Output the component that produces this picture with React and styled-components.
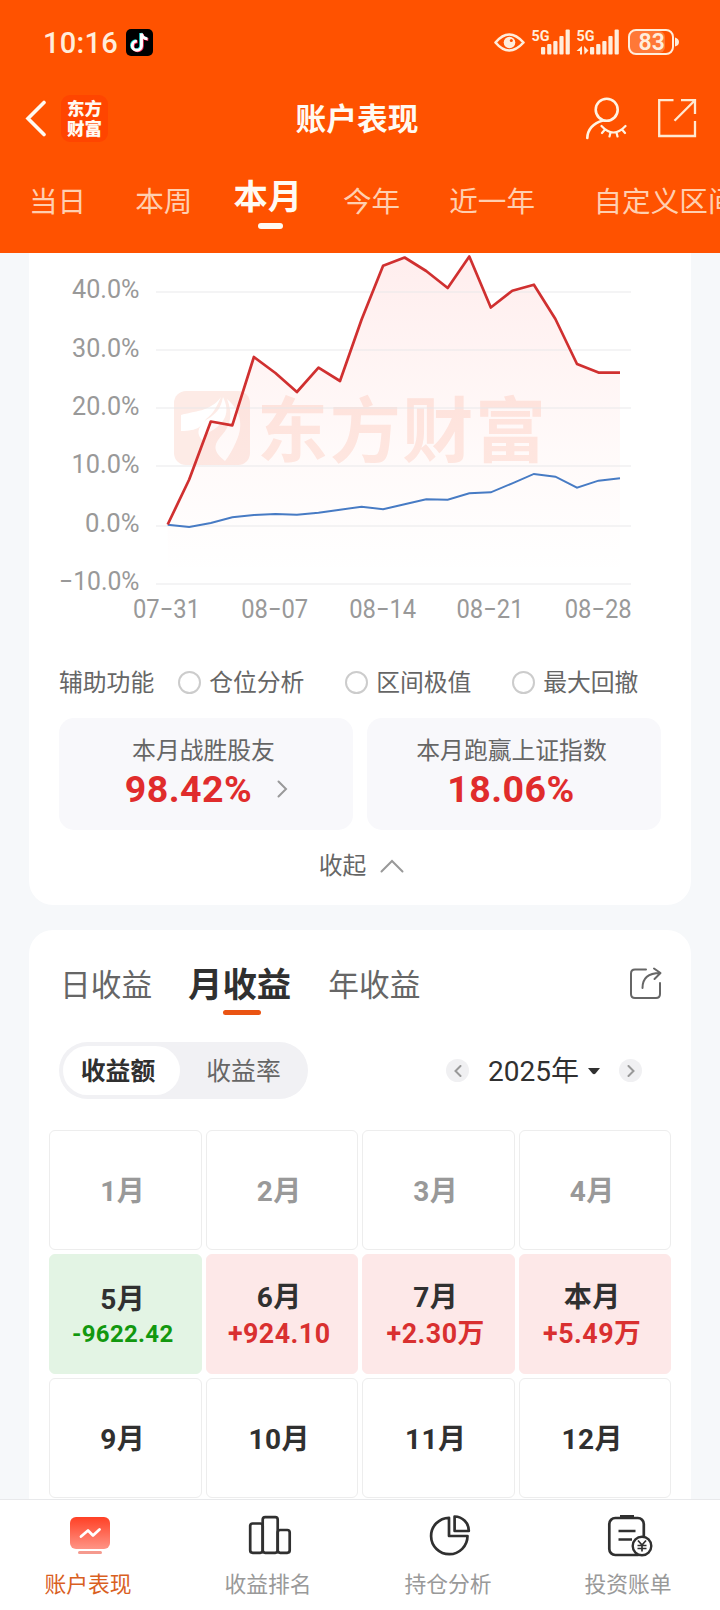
import React from 'react';
import styled, { createGlobalStyle } from 'styled-components';

const FONT = 'Roboto, "Noto Sans CJK SC", sans-serif';

const GlobalStyle = createGlobalStyle`
  * { box-sizing: border-box; }
  body { margin: 0; background: #f7f8fa; font-family: ${FONT}; }
  svg { display: block; flex: none; }
`;

const Page = styled.div`
  width: 720px;
  height: 1610px;
  display: flex;
  flex-direction: column;
  overflow: hidden;
  background: #f6f8fa;
  white-space: nowrap;
`;

/* ---------- header ---------- */
const Header = styled.header`
  height: 253px;
  flex: none;
  display: flex;
  flex-direction: column;
  background: #ff5200;
  color: #fffaf2;
`;

const StatusBar = styled.div`
  height: 83px;
  display: flex;
  align-items: center;
  padding: 1px 39px 0 43px;
`;

const Clock = styled.span`
  width: 83px;
  padding-top: 1px;
  font-size: 29px;
  line-height: 36px;
  font-weight: 500;
  letter-spacing: 0.3px;
  color: #ffeddb;
`;

const StatusIcons = styled.div`
  margin-left: auto;
`;

const TitleBar = styled.div`
  height: 71px;
  display: grid;
  grid-template-columns: 1fr auto 1fr;
  align-items: center;
  padding: 0 23px 0 25px;
`;

const TitleSide = styled.div`
  display: flex;
  align-items: center;
  justify-content: ${(p) => (p.$end ? 'flex-end' : 'flex-start')};
  gap: ${(p) => (p.$end ? 30 : 13)}px;
`;

const Brand = styled.div`
  width: 47px;
  height: 47px;
  border-radius: 9px;
  background: #ff4500;
  display: flex;
  flex-direction: column;
  align-items: center;
  justify-content: center;
  font-size: 17.5px;
  line-height: 20px;
  font-weight: 900;
`;

const Title = styled.h1`
  margin: 0 8px 0 0;
  padding-top: 2px;
  font-size: 30.7px;
  line-height: 40px;
  font-weight: 700;
`;

const RangeTabs = styled.nav`
  display: flex;
  padding-left: 29px;
  height: 99px;
  overflow: hidden;
`;

const RangeTab = styled.div`
  flex: none;
  margin-left: ${(p) => p.$gap}px;
  padding-top: ${(p) => (p.$active ? 23 : 28)}px;
  font-size: ${(p) => (p.$active ? 34.3 : 28.6)}px;
  line-height: 40px;
  font-weight: ${(p) => (p.$active ? 700 : 400)};
  color: ${(p) => (p.$active ? '#fffaf2' : '#ffcfb0')};
  display: flex;
  flex-direction: column;
  align-items: center;
`;

const RangeMark = styled.i`
  width: 25px;
  height: 6px;
  margin: 6px 0 0 5px;
  border-radius: 3px;
  background: #fffaf2;
`;

/* ---------- content ---------- */
const Content = styled.main`
  height: 1246px;
  flex: none;
  overflow: hidden;
  padding: 0 29px;
`;

const Card = styled.section`
  background: #fff;
  border-radius: ${(p) => (p.$first ? '0 0 24px 24px' : '24px 24px 0 0')};
  height: ${(p) => (p.$first ? 652 : 569)}px;
  margin-bottom: 25px;
`;

const OptionRow = styled.div`
  height: 65px;
  display: flex;
  align-items: center;
  padding-left: 30px;
  font-size: 23.8px;
  line-height: 30px;
  color: #666;
`;

const Option = styled.label`
  width: 167px;
  display: flex;
  align-items: center;
  gap: 8px;
  &:first-of-type { margin-left: 24px; }
`;

const Radio = styled.i`
  width: 23px;
  height: 23px;
  border: 2px solid #ccc;
  border-radius: 50%;
`;

const StatRow = styled.div`
  display: grid;
  grid-template-columns: 1fr 1fr;
  gap: 14px;
  padding: 3px 30px 0;
`;

const Stat = styled.div`
  height: 112px;
  padding-top: 18px;
  border-radius: 15px;
  background: #f8f8fb;
  display: flex;
  flex-direction: column;
  align-items: center;
`;

const StatLabel = styled.div`
  font-size: 23.8px;
  line-height: 30px;
  margin-right: 5px;
  color: #666;
`;

const StatValue = styled.div`
  display: flex;
  align-items: center;
  gap: 25px;
  margin-top: 4px;
  margin-right: ${(p) => (p.$link ? -1 : 6)}px;
  font-size: 37.5px;
  line-height: 38px;
  font-weight: 700;
  letter-spacing: 0.5px;
  color: #e02c2c;
`;

const Collapse = styled.div`
  height: 71px;
  display: flex;
  align-items: center;
  justify-content: center;
  gap: 14px;
  padding-left: 3px;
  font-size: 23.8px;
  line-height: 30px;
  color: #666;
`;

const PeriodBar = styled.div`
  height: 98px;
  display: flex;
  align-items: flex-start;
  padding: 32px 29px 0 31px;
`;

const PeriodTab = styled.div`
  margin-right: ${(p) => (p.$active ? 37 : 36)}px;
  padding-top: ${(p) => (p.$active ? 2 : 3)}px;
  font-size: ${(p) => (p.$active ? 34.4 : 30.7)}px;
  line-height: 42px;
  font-weight: ${(p) => (p.$active ? 700 : 400)};
  color: ${(p) => (p.$active ? '#303030' : '#666')};
  display: flex;
  flex-direction: column;
  align-items: center;
`;

const PeriodMark = styled.i`
  width: 38px;
  height: 5px;
  margin: 4px 0 0 4px;
  border-radius: 3px;
  background: #ea5413;
`;

const ShareSlot = styled.span`
  margin: 5px 0 0 auto;
`;

const Controls = styled.div`
  height: 85px;
  display: flex;
  align-items: flex-start;
  justify-content: space-between;
  padding: 14px 49px 0 30px;
`;

const Segmented = styled.div`
  width: 249px;
  height: 57px;
  padding: 4px;
  display: flex;
  border-radius: 29px;
  background: #f1f1f4;
`;

const Segment = styled.div`
  width: ${(p) => (p.$on ? 117 : 124)}px;
  height: 49px;
  padding-right: ${(p) => (p.$on ? 7 : 0)}px;
  padding-left: ${(p) => (p.$on ? 0 : 3)}px;
  border-radius: 25px;
  background: ${(p) => (p.$on ? '#fff' : 'transparent')};
  color: ${(p) => (p.$on ? '#303030' : '#666')};
  font-weight: ${(p) => (p.$on ? 700 : 400)};
  font-size: 24.8px;
  line-height: 52px;
  text-align: center;
`;

const YearPicker = styled.div`
  height: 57px;
  display: flex;
  align-items: center;
`;

const Round = styled.span`
  width: 23px;
  height: 23px;
  border-radius: 50%;
  background: #f0f0f2;
  display: grid;
  place-items: center;
`;

const Year = styled.span`
  display: flex;
  align-items: center;
  gap: 9px;
  margin: 0 19px;
  padding-top: 2px;
  font-size: 28px;
  line-height: 36px;
  color: #303030;
`;

const MonthGrid = styled.div`
  display: grid;
  grid-template-columns: repeat(4, 152.5px);
  grid-auto-rows: 120px;
  gap: 4px;
  padding: 17px 20px 0;
  justify-content: space-between;
`;

const TONES = {
  up: { bg: '#fde8e8', border: '#fde8e8', value: '#d93030' },
  down: { bg: '#e3f4e4', border: '#e3f4e4', value: '#12980f' },
  none: { bg: '#fff', border: '#ededed', value: '#303030' },
};

const Month = styled.div`
  border: 1px solid ${(p) => TONES[p.$tone].border};
  background: ${(p) => TONES[p.$tone].bg};
  border-radius: 6px;
  padding: 4px 5px 0 0;
  display: flex;
  flex-direction: column;
  align-items: center;
  justify-content: center;
`;

const MonthName = styled.div`
  font-size: 28px;
  line-height: 36px;
  font-weight: 700;
  letter-spacing: 0.5px;
  color: ${(p) => (p.$muted ? '#999' : '#303030')};
`;

const MonthValue = styled.div`
  font-size: ${(p) => (p.$tone === 'down' ? 24 : 26.8)}px;
  line-height: ${(p) => (p.$tone === 'down' ? 33 : 37)}px;
  font-weight: 700;
  letter-spacing: ${(p) => (p.$tone === 'down' ? 0.3 : 0.5)}px;
  color: ${(p) => TONES[p.$tone].value};
`;

/* ---------- bottom navigation ---------- */
const BottomNav = styled.nav`
  height: 111px;
  flex: none;
  display: grid;
  grid-template-columns: repeat(4, 180px);
  background: #fff;
  border-top: 1px solid #e8e9eb;
`;

const NavItem = styled.div`
  display: flex;
  flex-direction: column;
  align-items: center;
  padding-top: 12px;
`;

const NavLabel = styled.span`
  margin: 12px 4px 0 0;
  font-size: 21.8px;
  line-height: 30px;
  color: ${(p) => (p.$active ? '#d9601f' : '#999')};
`;

/* ---------- chart ---------- */
const X0 = 167.7;
const STEP = 21.54;
const ACCOUNT = [524.5, 479.5, 421.5, 425.3, 357, 373, 392, 367.7, 381, 319.5, 265.7, 257.5, 271, 288, 256.5, 307.5, 290.7, 284.7, 319, 364, 372.6, 372.6];
const INDEX = [524.7, 527, 523, 517.3, 515, 514, 514.7, 512.7, 509.7, 506.7, 509.3, 504.3, 499.3, 499.7, 493.3, 492.3, 483.3, 474, 476.7, 487.7, 480.7, 478.3];
const points = (ys) => ys.map((y, i) => `${(X0 + i * STEP).toFixed(1)},${y}`).join(' ');

const Y_TICKS = [
  ['40.0%', 292, 298, 72, 67.5],
  ['30.0%', 350, 357, 72, 67.5],
  ['20.0%', 408, 415, 72, 67.5],
  ['10.0%', 466, 473, 71.5, 68],
  ['0.0%', 526, 532, 85, 54.500],
  ['−10.0%', 584, 590, 59, 80.500],
];
const X_TICKS = [['07−31', 166.5], ['08−07', 274.7], ['08−14', 382.7], ['08−21', 490], ['08−28', 598.2]];

const ChartText = styled.text`
  font-family: ${FONT};
  font-size: 26px;
  fill: #999;
`;

const WatermarkText = styled.text`
  font-family: "Noto Sans CJK SC", sans-serif;
  font-size: 71px;
  font-weight: 700;
  fill: #feeae4;
`;

function Chart() {
  return (
    <svg width="662" height="397" viewBox="29 253 662 397">
      <defs>
        <linearGradient id="area" x1="0" y1="256" x2="0" y2="575" gradientUnits="userSpaceOnUse">
          <stop offset="0" stopColor="#ff3c3c" stopOpacity="0.09" />
          <stop offset="0.6" stopColor="#ff4c3c" stopOpacity="0.03" />
          <stop offset="1" stopColor="#ff4c3c" stopOpacity="0" />
        </linearGradient>
      </defs>
      <rect x="174" y="391" width="76" height="74" rx="12" fill="#fdebe6" />
      <path d="M181 415C194 411 210 412 221 397C216 408 213 414 206 419C202 426 198 431 181 431Z" fill="#fff" />
      <path d="M203 441C196 434 197 428 206 420C218 413 221 407 223 397C231 413 224 423 213 430C207 433 204 436 203 441Z" fill="#fff" />
      <path d="M225 461C214 452 212 446 222 435C231 425 233 413 227 399C244 413 242 430 236 442C233 449 229 456 225 461Z" fill="#fff" />
      <WatermarkText x="257" y="456" textLength="289">东方财富</WatermarkText>
      <polygon points={`${X0},575 ${points(ACCOUNT)} 620,575`} fill="url(#area)" />
      {Y_TICKS.map(([label, line, base, x, w]) => (
        <g key={label}>
          <line x1="156" x2="631" y1={line} y2={line} stroke="#e6e6e8" strokeOpacity="0.6" strokeWidth="1.6" />
          <ChartText x={x} y={base} textLength={w} lengthAdjust="spacingAndGlyphs">{label}</ChartText>
        </g>
      ))}
      {X_TICKS.map(([label, x]) => (
        <ChartText key={label} x={x - 33.500} y="618" textLength="67" lengthAdjust="spacingAndGlyphs">{label}</ChartText>
      ))}
      <polyline points={points(INDEX)} fill="none" stroke="#477bc4" strokeWidth="1.9" />
      <polyline points={points(ACCOUNT)} fill="none" stroke="#d03030" strokeWidth="2.7" strokeLinejoin="round" />
    </svg>
  );
}

/* ---------- icons ---------- */
const NOTE = 'M15.5 4.5v12.2a4.6 4.6 0 1 1-4.6-4.6M15.5 4.5c.5 3.3 2.6 5.1 6 5.4';

function NoteIcon() {
  return (
    <svg width="27" height="27" viewBox="0 0 27 27" fill="none">
      <rect width="27" height="27" rx="5" fill="#000" />
      <g strokeWidth="2.9">
        <path d={NOTE} stroke="#25e5e0" transform="translate(-.8 -.5)" />
        <path d={NOTE} stroke="#fb2f5b" transform="translate(.8 .6)" />
        <path d={NOTE} stroke="#fff" />
      </g>
    </svg>
  );
}

const SignalText = styled.text`
  font-family: ${FONT};
  font-size: ${(p) => p.$size}px;
  font-weight: ${(p) => p.$weight};
`;

const BARS = [[0, 47], [6.2, 44], [12.3, 41], [18.4, 36], [24.6, 29.5]];

function StatusGlyphs() {
  return (
    <svg width="187" height="30" viewBox="494 27 187 30" fill="#ffeddb">
      <path d="M495.5 42.5Q509 26.5 523.5 42.5Q509 58.5 495.5 42.5Z" fill="none" stroke="#ffeddb" strokeWidth="2.6" strokeLinejoin="round" />
      <circle cx="509.5" cy="42.500" r="5.8" />
      <circle cx="511.3" cy="40.500" r="1.5" fill="#ff5200" />
      {[541, 590].map((x) => BARS.map(([dx, y]) => (
        <rect key={x + dx} x={x + dx} y={y} width="4.2" height={54.5 - y} rx="1" />
      )))}
      <SignalText $size={15.5} $weight={700} x="531.5" y="41" textLength="18" lengthAdjust="spacingAndGlyphs">5G</SignalText>
      <SignalText $size={15.5} $weight={700} x="576.5" y="41" textLength="18" lengthAdjust="spacingAndGlyphs">5G</SignalText>
      <path d="M576.500 51L582 46V54.500H580V51ZM584 46L588.500 50.500L584.500 54.500Z" />
      <rect x="629" y="31" width="36" height="22" rx="6" opacity=".25" />
      <rect x="629" y="30" width="44" height="24" rx="7" fill="none" stroke="#ffeddb" strokeWidth="2" />
      <path d="M675 37.500q4 1 4 4.500t-4 4.500z" />
      <SignalText $size={23} $weight={600} x="638.5" y="50" textLength="26.5">83</SignalText>
    </svg>
  );
}

const BackIcon = () => (
  <svg width="23" height="38" viewBox="0 0 23 38" fill="none" stroke="#fffaf2" strokeWidth="3.6" strokeLinecap="round">
    <path d="M19 2.500L3 18.500L19 34.500" />
  </svg>
);

const UserHiddenIcon = () => (
  <svg width="42" height="44" viewBox="586 97 42 44" fill="none" stroke="#fff3e2" strokeWidth="2.6" strokeLinecap="round">
    <circle cx="607.7" cy="109.7" r="11" />
    <path d="M604 120.500C594 123 588.500 130 588.300 138" />
    <path d="M602.500 126Q614.500 139 626.500 126M606 129.500L603 133M611.500 132.500L610.500 136.500M617.500 132.500L618.500 136.500M623 129.500L626 133" strokeWidth="2.2" />
  </svg>
);

const ExpandIcon = () => (
  <svg width="40" height="40" viewBox="658 99 40 40" fill="none" stroke="#ffe9d2" strokeWidth="2.3">
    <path d="M674.500 100.200H660.200V136H696V121M682 100.200H696V114M695.500 100.700L675.500 120.700" />
  </svg>
);

const ShareIcon = () => (
  <svg width="33" height="34" viewBox="630 967 33 34" fill="none" stroke="#666" strokeWidth="2" strokeLinecap="round" strokeLinejoin="round">
    <path d="M647 969.500H636Q632 969.500 632 973.500V994Q632 998 636 998H657Q661 998 661 994V983" />
    <path d="M643.500 988Q643.500 973 661 973M655 968.500L661.500 973L655.500 979" />
  </svg>
);

const Chevron = ({ w, h, d, width = 2, color = '#999' }) => (
  <svg width={w} height={h} viewBox={`0 0 ${w} ${h}`} fill="none" stroke={color} strokeWidth={width} strokeLinecap="round">
    <path d={d} />
  </svg>
);

const NavSvg = ({ children, x }) => (
  <svg width="48" height="46" viewBox={`${x} 1512 48 46`} fill="none" stroke="#303030" strokeWidth="2.7" strokeLinejoin="round">
    {children}
  </svg>
);

const TrendIcon = () => (
  <NavSvg x={66}>
    <defs>
      <linearGradient id="trend" x1="0" y1="0" x2="0" y2="1">
        <stop offset="0" stopColor="#ff4025" />
        <stop offset="1" stopColor="#ff9486" />
      </linearGradient>
    </defs>
    <rect x="70" y="1517" width="40" height="32" rx="6" fill="url(#trend)" stroke="none" />
    <path d="M81 1536.500L88 1530.500L93 1535.500L99.500 1529.500" stroke="#fff" strokeWidth="2.8" strokeLinecap="round" />
    <rect x="78" y="1551" width="24" height="3" rx="1.5" fill="#f59a8e" stroke="none" />
  </NavSvg>
);

const RankIcon = () => (
  <NavSvg x={246}>
    <rect x="250.2" y="1523.5" width="12.5" height="29.3" rx="2.5" />
    <rect x="262.7" y="1517.2" width="15" height="35.6" rx="2.5" />
    <rect x="277.7" y="1530" width="12" height="22.8" rx="2.5" />
  </NavSvg>
);

const PieIcon = () => (
  <NavSvg x={426}>
    <path d="M449 1517.800A18.200 18.200 0 1 0 467.500 1536H449Z" />
    <path d="M454.600 1516.500V1531H468.800A14.300 14.300 0 0 0 454.600 1516.500Z" />
  </NavSvg>
);

const BillIcon = () => (
  <NavSvg x={606}>
    <rect x="609.3" y="1518" width="34.5" height="37" rx="6" />
    <path d="M620 1517H634" strokeWidth="4" />
    <path d="M618.500 1531H635.500M618.500 1539.500H632" />
    <circle cx="642" cy="1546" r="9.3" fill="#fff" strokeWidth="2.4" />
    <path d="M638 1540.500L642 1545L646 1540.500M642 1545V1551.500M637.500 1545.500H646.500M637.500 1548.500H646.500" strokeWidth="1.7" />
  </NavSvg>
);

/* ---------- data ---------- */
const RANGES = [['当日', 0], ['本周', 49], ['本月', 41, true], ['今年', 41], ['近一年', 49], ['自定义区间', 58.5]];
const OPTIONS = ['仓位分析', '区间极值', '最大回撤'];
const MONTHS = [
  { name: '1月', muted: true },
  { name: '2月', muted: true },
  { name: '3月', muted: true },
  { name: '4月', muted: true },
  { name: '5月', value: '-9622.42', tone: 'down' },
  { name: '6月', value: '+924.10', tone: 'up' },
  { name: '7月', value: '+2.30万', tone: 'up' },
  { name: '本月', value: '+5.49万', tone: 'up' },
  { name: '9月' },
  { name: '10月' },
  { name: '11月' },
  { name: '12月' },
];
const NAV = [['账户表现', TrendIcon, true], ['收益排名', RankIcon], ['持仓分析', PieIcon], ['投资账单', BillIcon]];

export default function App() {
  return (
    <Page>
      <GlobalStyle />
      <Header>
        <StatusBar>
          <Clock>10:16</Clock>
          <NoteIcon />
          <StatusIcons><StatusGlyphs /></StatusIcons>
        </StatusBar>
        <TitleBar>
          <TitleSide>
            <BackIcon />
            <Brand><span>东方</span><span>财富</span></Brand>
          </TitleSide>
          <Title>账户表现</Title>
          <TitleSide $end>
            <UserHiddenIcon />
            <ExpandIcon />
          </TitleSide>
        </TitleBar>
        <RangeTabs>
          {RANGES.map(([label, gap, active]) => (
            <RangeTab key={label} $gap={gap} $active={active}>
              {label}
              {active && <RangeMark />}
            </RangeTab>
          ))}
        </RangeTabs>
      </Header>

      <Content>
        <Card $first>
          <Chart />
          <OptionRow>
            辅助功能
            {OPTIONS.map((o) => (
              <Option key={o}><Radio />{o}</Option>
            ))}
          </OptionRow>
          <StatRow>
            <Stat>
              <StatLabel>本月战胜股友</StatLabel>
              <StatValue $link>
                98.42%
                <Chevron w={11} h={18} d="M1.500 1.500L9 9L1.500 16.500" />
              </StatValue>
            </Stat>
            <Stat>
              <StatLabel>本月跑赢上证指数</StatLabel>
              <StatValue>18.06%</StatValue>
            </Stat>
          </StatRow>
          <Collapse>
            收起
            <Chevron w={24} h={14} d="M1.500 12.500L12 2L22.500 12.500" />
          </Collapse>
        </Card>

        <Card>
          <PeriodBar>
            <PeriodTab>日收益</PeriodTab>
            <PeriodTab $active>月收益<PeriodMark /></PeriodTab>
            <PeriodTab>年收益</PeriodTab>
            <ShareSlot><ShareIcon /></ShareSlot>
          </PeriodBar>
          <Controls>
            <Segmented>
              <Segment $on>收益额</Segment>
              <Segment>收益率</Segment>
            </Segmented>
            <YearPicker>
              <Round><Chevron w={8} h={12} d="M6.500 1L1.500 6L6.500 11" /></Round>
              <Year>
                2025年
                <svg width="12" height="7" viewBox="0 0 12 7" fill="#303030"><path d="M0 0H12L7.500 5.500Q6 7 4.500 5.500Z" /></svg>
              </Year>
              <Round><Chevron w={8} h={12} d="M1.500 1L6.500 6L1.500 11" /></Round>
            </YearPicker>
          </Controls>
          <MonthGrid>
            {MONTHS.map(({ name, value, tone = 'none', muted }) => (
              <Month key={name} $tone={tone}>
                <MonthName $muted={muted}>{name}</MonthName>
                {value && <MonthValue $tone={tone}>{value}</MonthValue>}
              </Month>
            ))}
          </MonthGrid>
        </Card>
      </Content>

      <BottomNav>
        {NAV.map(([label, Icon, active]) => (
          <NavItem key={label}>
            <Icon />
            <NavLabel $active={active}>{label}</NavLabel>
          </NavItem>
        ))}
      </BottomNav>
    </Page>
  );
}
